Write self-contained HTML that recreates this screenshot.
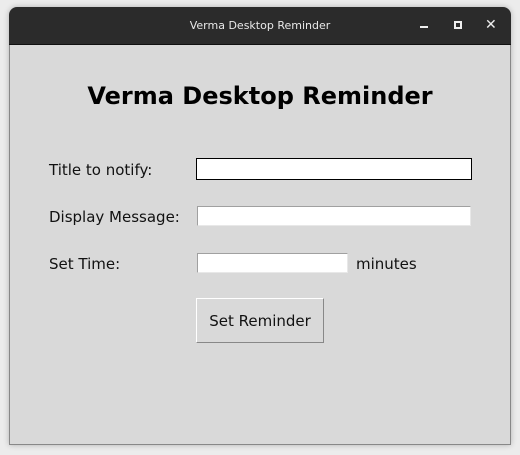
<!DOCTYPE html>
<html><head><style>
body{margin:0;width:520px;height:455px;background:#ececec;position:relative;overflow:hidden;font-family:"DejaVu Sans","Liberation Sans",sans-serif}
.win{position:absolute;left:9px;top:7px;width:502px;height:438px;border-radius:8px 8px 0 0;overflow:hidden;box-shadow:0 0 6px rgba(0,0,0,.25)}
.tb{height:37px;background:#2b2b2b;color:#e8e8e8;font-size:11px;text-align:center;line-height:38px;border-bottom:1px solid #111}
.bd{position:absolute;top:38px;left:0;right:0;bottom:0;background:#d9d9d9;border:1px solid #888;border-top:none}
.a{position:absolute}
.lbl{font-size:15px;color:#111}
.e{position:absolute;background:#fff;box-sizing:border-box;border:1px solid #a0a0a0;border-right-color:#e8e8e8;border-bottom-color:#e8e8e8}
</style></head><body>
<div class="win"><div class="tb">Verma Desktop Reminder</div>
<div class="a" style="left:411px;top:19px;width:8px;height:2px;background:#eee"></div>
<div class="a" style="left:445px;top:14px;width:4px;height:4px;border:2px solid #eee"></div>
<div class="a" style="left:476px;top:10px;color:#eee;font-size:14px;font-weight:bold">✕</div>
<div class="bd"></div></div>
<div class="a" style="left:0;width:520px;top:82px;text-align:center;font-size:24px;font-weight:bold;color:#000">Verma Desktop Reminder</div>
<div class="a lbl" style="left:49px;top:161px">Title to notify:</div>
<div class="a lbl" style="left:49px;top:208px">Display Message:</div>
<div class="a lbl" style="left:49px;top:255px">Set Time:</div>
<div class="e" style="left:196px;top:158px;width:276px;height:22px;border:1.5px solid #000"></div>
<div class="e" style="left:197px;top:206px;width:274px;height:20px"></div>
<div class="e" style="left:197px;top:253px;width:151px;height:20px"></div>
<div class="a lbl" style="left:356px;top:255px">minutes</div>
<div class="a" style="left:196px;top:298px;width:128px;height:45px;box-sizing:border-box;border:1px solid #888;border-left-color:#fff;border-top-color:#fff;text-align:center;line-height:45px;font-size:15px;color:#111">Set Reminder</div>
</body></html>
